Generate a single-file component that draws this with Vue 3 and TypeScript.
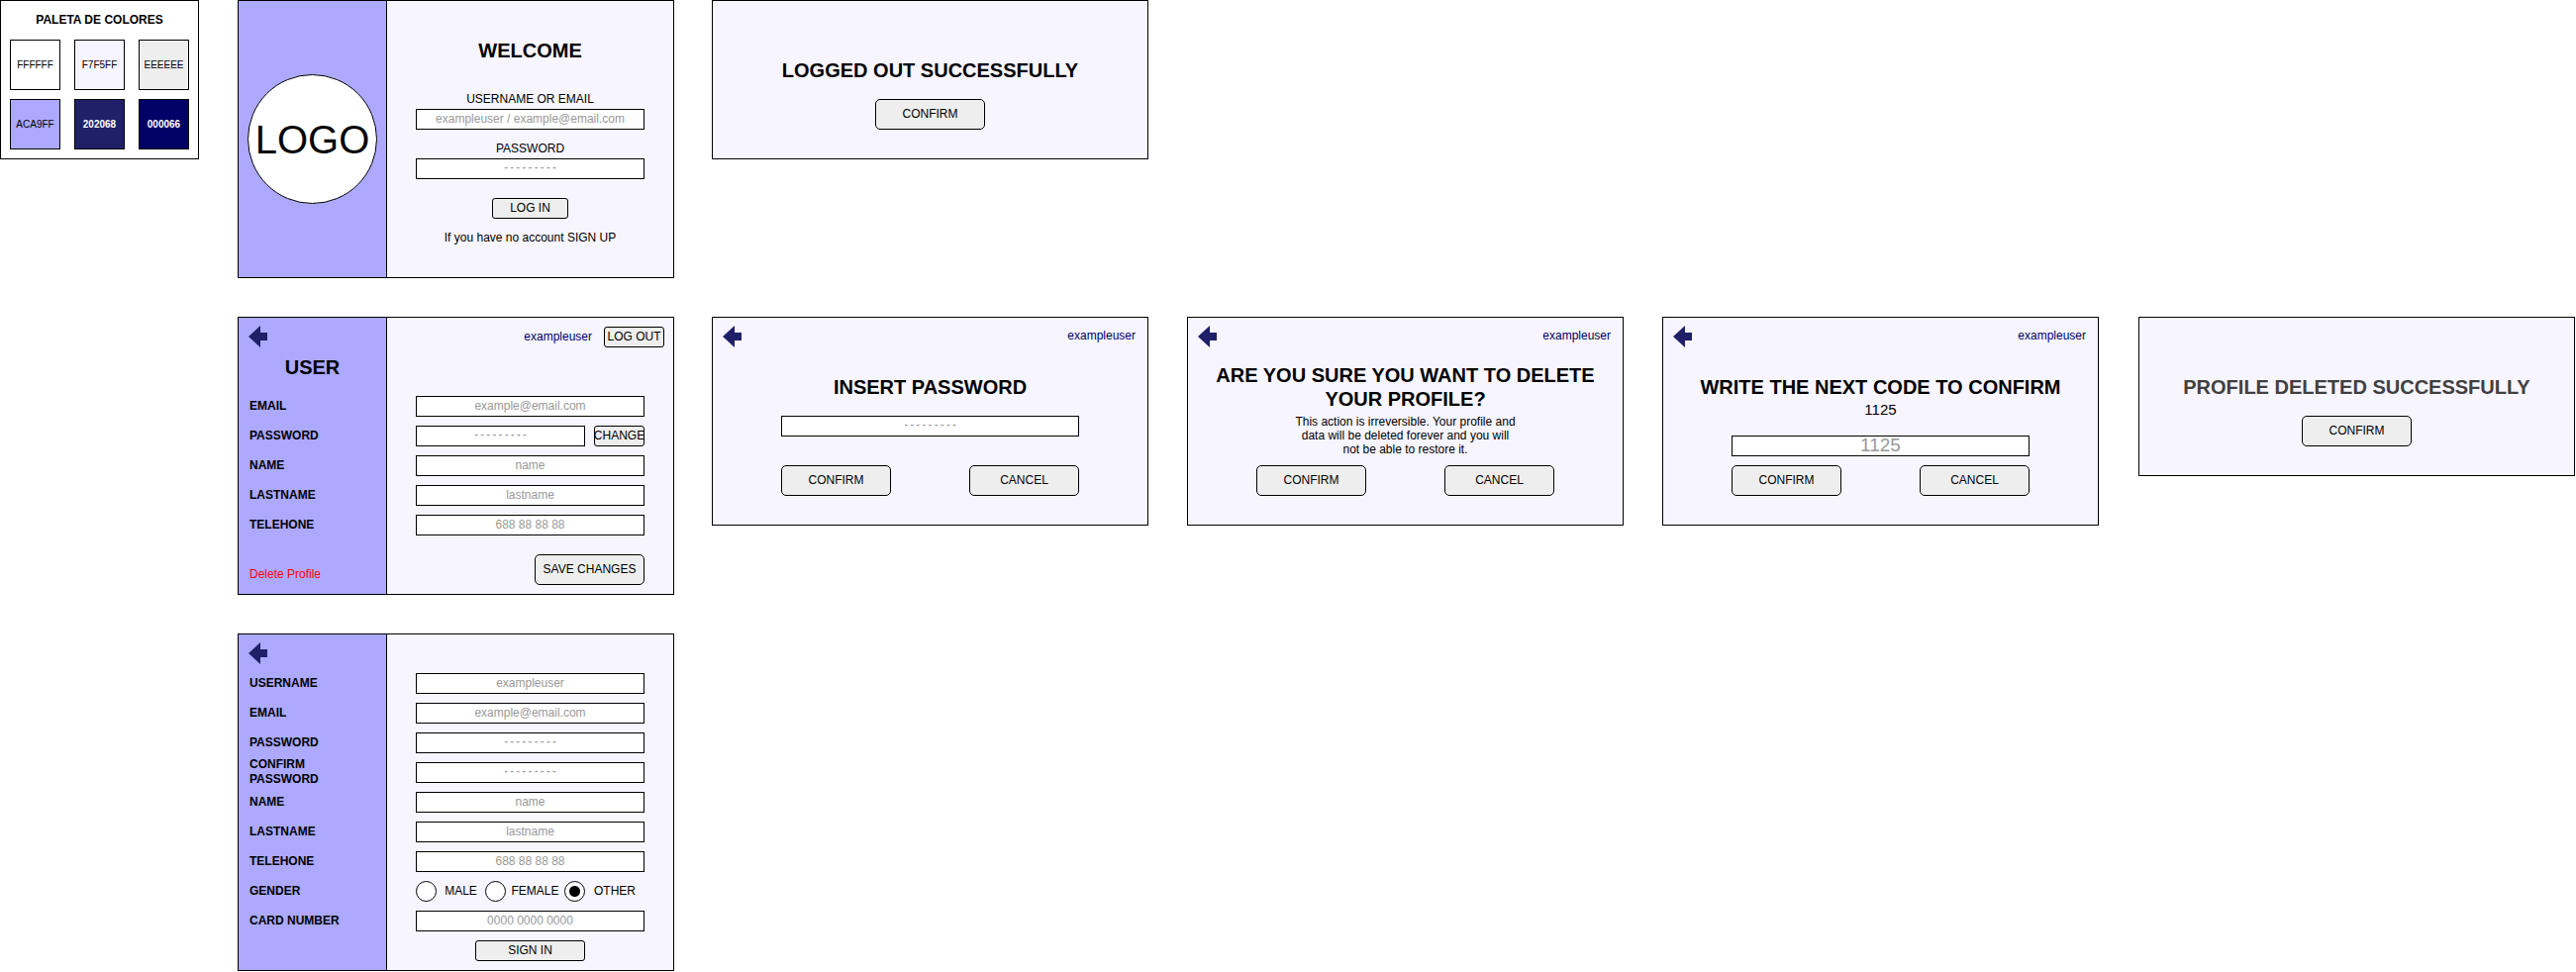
<script setup lang="ts">
interface Swatch {
  hex: string
  dark: boolean
}

interface Field {
  id: string
  label: string
  type: string
  placeholder: string
}

const dots = '- - - - - - - - -'

const swatches: Swatch[] = [
  { hex: 'FFFFFF', dark: false },
  { hex: 'F7F5FF', dark: false },
  { hex: 'EEEEEE', dark: false },
  { hex: 'ACA9FF', dark: false },
  { hex: '202068', dark: true },
  { hex: '000066', dark: true },
]

const profileFields: Field[] = [
  { id: 'profile-email', label: 'EMAIL', type: 'email', placeholder: 'example@email.com' },
  { id: 'profile-password', label: 'PASSWORD', type: 'password', placeholder: dots },
  { id: 'profile-name', label: 'NAME', type: 'text', placeholder: 'name' },
  { id: 'profile-lastname', label: 'LASTNAME', type: 'text', placeholder: 'lastname' },
  { id: 'profile-phone', label: 'TELEHONE', type: 'tel', placeholder: '688 88 88 88' },
]

const signupFields: Field[] = [
  { id: 'signup-username', label: 'USERNAME', type: 'text', placeholder: 'exampleuser' },
  { id: 'signup-email', label: 'EMAIL', type: 'email', placeholder: 'example@email.com' },
  { id: 'signup-password', label: 'PASSWORD', type: 'password', placeholder: dots },
  { id: 'signup-confirm', label: 'CONFIRM PASSWORD', type: 'password', placeholder: dots },
  { id: 'signup-name', label: 'NAME', type: 'text', placeholder: 'name' },
  { id: 'signup-lastname', label: 'LASTNAME', type: 'text', placeholder: 'lastname' },
  { id: 'signup-phone', label: 'TELEHONE', type: 'tel', placeholder: '688 88 88 88' },
]

const genders: string[] = ['MALE', 'FEMALE', 'OTHER']
</script>

<template>
  <main class="board">
    <section class="card palette">
      <h2 class="palette-title">PALETA DE COLORES</h2>
      <div class="swatches">
        <div
          v-for="s in swatches"
          :key="s.hex"
          class="swatch"
          :class="{ dark: s.dark }"
          :style="{ backgroundColor: '#' + s.hex }"
        >{{ s.hex }}</div>
      </div>
    </section>

    <section class="card split login">
      <aside class="side side-logo">
        <div class="logo">LOGO</div>
      </aside>
      <form class="pane login-pane" @submit.prevent>
        <h1 class="title">WELCOME</h1>
        <div class="stack">
          <label class="caption" for="login-user">USERNAME OR EMAIL</label>
          <input id="login-user" class="field" type="text" placeholder="exampleuser / example@email.com">
          <label class="caption next" for="login-password">PASSWORD</label>
          <input id="login-password" class="field" type="password" :placeholder="dots">
        </div>
        <button class="btn small login-btn" type="submit">LOG IN</button>
        <p class="signup-line">If you have no account <a href="#signup">SIGN UP</a></p>
      </form>
    </section>

    <section class="card notice logged-out">
      <h1 class="title">LOGGED OUT SUCCESSFULLY</h1>
      <button class="btn" type="button">CONFIRM</button>
    </section>

    <section class="card split profile">
      <aside class="side">
        <button class="back" type="button" aria-label="Back">
          <svg viewBox="0 0 19 22" width="19" height="22"><path d="M0 11 L12 0 V7 H19 V15 H12 V22 Z" /></svg>
        </button>
        <h1 class="title side-title">USER</h1>
        <div class="labels">
          <label v-for="f in profileFields" :key="f.id" :for="f.id">{{ f.label }}</label>
        </div>
        <a class="delete" href="#delete">Delete Profile</a>
      </aside>
      <form class="pane profile-pane" @submit.prevent>
        <div class="account">
          <a class="user" href="#profile">exampleuser</a>
          <button class="btn small logout" type="button">LOG OUT</button>
        </div>
        <div class="fields">
          <div v-for="f in profileFields" :key="f.id" class="line">
            <input :id="f.id" class="field" :type="f.type" :placeholder="f.placeholder">
            <button v-if="f.type === 'password'" class="btn small change" type="button">CHANGE</button>
          </div>
        </div>
        <button class="btn save" type="submit">SAVE CHANGES</button>
      </form>
    </section>

    <section class="card dialog insert">
      <header class="bar">
        <button class="back" type="button" aria-label="Back">
          <svg viewBox="0 0 19 22" width="19" height="22"><path d="M0 11 L12 0 V7 H19 V15 H12 V22 Z" /></svg>
        </button>
        <a class="user" href="#profile">exampleuser</a>
      </header>
      <div class="body">
        <h1 class="title">INSERT PASSWORD</h1>
        <input class="field" type="password" aria-label="Password" :placeholder="dots">
      </div>
      <div class="actions">
        <button class="btn" type="button">CONFIRM</button>
        <button class="btn" type="button">CANCEL</button>
      </div>
    </section>

    <section class="card dialog sure">
      <header class="bar">
        <button class="back" type="button" aria-label="Back">
          <svg viewBox="0 0 19 22" width="19" height="22"><path d="M0 11 L12 0 V7 H19 V15 H12 V22 Z" /></svg>
        </button>
        <a class="user" href="#profile">exampleuser</a>
      </header>
      <div class="body">
        <h1 class="title">ARE YOU SURE YOU WANT TO DELETE YOUR PROFILE?</h1>
        <p class="warning">This action is irreversible. Your profile and data will be deleted forever and you will not be able to restore it.</p>
      </div>
      <div class="actions">
        <button class="btn" type="button">CONFIRM</button>
        <button class="btn" type="button">CANCEL</button>
      </div>
    </section>

    <section class="card dialog code">
      <header class="bar">
        <button class="back" type="button" aria-label="Back">
          <svg viewBox="0 0 19 22" width="19" height="22"><path d="M0 11 L12 0 V7 H19 V15 H12 V22 Z" /></svg>
        </button>
        <a class="user" href="#profile">exampleuser</a>
      </header>
      <div class="body">
        <h1 class="title">WRITE THE NEXT CODE TO CONFIRM</h1>
        <p class="number">1125</p>
        <input class="field large" type="text" aria-label="Confirmation code" placeholder="1125">
      </div>
      <div class="actions">
        <button class="btn" type="button">CONFIRM</button>
        <button class="btn" type="button">CANCEL</button>
      </div>
    </section>

    <section class="card notice deleted">
      <h1 class="title">PROFILE DELETED SUCCESSFULLY</h1>
      <button class="btn" type="button">CONFIRM</button>
    </section>

    <section class="card split signup">
      <aside class="side">
        <button class="back" type="button" aria-label="Back">
          <svg viewBox="0 0 19 22" width="19" height="22"><path d="M0 11 L12 0 V7 H19 V15 H12 V22 Z" /></svg>
        </button>
        <div class="labels">
          <label v-for="f in signupFields" :key="f.id" :for="f.id">{{ f.label }}</label>
          <span id="gender-label" class="label">GENDER</span>
          <label for="signup-card">CARD NUMBER</label>
        </div>
      </aside>
      <form id="signup" class="pane signup-pane" @submit.prevent>
        <div class="fields">
          <div v-for="f in signupFields" :key="f.id" class="line">
            <input :id="f.id" class="field" :type="f.type" :placeholder="f.placeholder">
          </div>
          <div class="genders" role="radiogroup" aria-labelledby="gender-label">
            <label v-for="g in genders" :key="g" class="gender">
              <input type="radio" name="gender" :value="g" :checked="g === 'OTHER'">
              <span>{{ g }}</span>
            </label>
          </div>
          <div class="line">
            <input id="signup-card" class="field" type="text" placeholder="0000 0000 0000">
          </div>
        </div>
        <button class="btn small signup-btn" type="submit">SIGN IN</button>
      </form>
    </section>
  </main>
</template>

<style>
body {
  background: #fff;
}
</style>

<style scoped>
.board,
.board * {
  box-sizing: border-box;
}

.board {
  display: grid;
  grid-template-columns:
    201fr 39px 441fr 38px 441fr 39px 441fr 39px 441fr 40px 441fr;
  row-gap: 39px;
  align-items: start;
  padding: 0 1px 1px 0;
  font: 12px/20px "Liberation Sans", Arial, sans-serif;
  color: #000;
}

h1,
h2,
p {
  margin: 0;
}

a {
  color: inherit;
  text-decoration: none;
}

.card {
  border: 1px solid #000;
  background: #f7f5ff;
}

.palette { grid-area: 1 / 1; }
.login { grid-area: 1 / 3; }
.logged-out { grid-area: 1 / 5; }
.profile { grid-area: 2 / 3; }
.insert { grid-area: 2 / 5; }
.sure { grid-area: 2 / 7; }
.code { grid-area: 2 / 9; }
.deleted { grid-area: 2 / 11; }
.signup { grid-area: 3 / 3; }

.title {
  font-size: 20px;
  line-height: 24px;
  font-weight: bold;
  text-align: center;
}

/* Palette */
.palette {
  background: #fff;
  padding: 9px;
}

.palette-title {
  font-size: 12px;
  line-height: 20px;
  text-align: center;
  margin-bottom: 10px;
}

.swatches {
  display: grid;
  grid-template-columns: repeat(3, 1fr);
  gap: 9px 14px;
}

.swatch {
  display: flex;
  align-items: center;
  justify-content: center;
  height: 51px;
  border: 1px solid #000;
  font-size: 10px;
}

.swatch.dark {
  color: #fff;
  font-weight: bold;
}

/* Controls */
.field {
  display: block;
  flex: 1;
  width: 100%;
  min-width: 0;
  height: 21px;
  padding: 0 0 1px;
  border: 1px solid #000;
  border-radius: 0;
  background: #fff;
  font: inherit;
  text-align: center;
  outline: none;
}

.field::placeholder {
  color: #999;
  opacity: 1;
}

.field[type="password"] {
  padding-bottom: 4px;
  font-size: 10px;
  font-weight: bold;
}

.field.large {
  font-size: 19px;
}

.btn {
  display: flex;
  align-items: center;
  justify-content: center;
  width: 111px;
  height: 31px;
  padding: 0 0 1px;
  border: 1px solid #000;
  border-radius: 5px;
  background: #eee;
  color: #000;
  font: inherit;
  white-space: nowrap;
}

.btn.small {
  height: 21px;
  border-radius: 3px;
}

.back {
  display: block;
  width: 19px;
  height: 22px;
  padding: 0;
  border: 0;
  background: none;
}

.back svg {
  display: block;
  fill: #202068;
}

.user {
  color: #006;
}

/* Two-part screens */
.split {
  display: flex;
}

.side {
  flex: 0 0 150px;
  padding: 8px 10px;
  border-right: 1px solid #000;
  background: #aca9ff;
}

.pane {
  flex: 1;
  min-width: 0;
  padding: 0 29px;
}

.side-logo {
  display: flex;
  align-items: center;
  justify-content: center;
  padding: 0;
}

.logo {
  display: flex;
  flex: none;
  align-items: center;
  justify-content: center;
  width: 131px;
  height: 131px;
  border: 1px solid #000;
  border-radius: 50%;
  background: #fff;
  font-size: 40px;
  line-height: 48px;
}

.login-pane {
  display: flex;
  flex-direction: column;
  align-items: center;
  padding-top: 38px;
  padding-bottom: 30px;
}

.stack {
  width: 100%;
  margin-top: 27px;
}

.caption {
  display: block;
  text-align: center;
}

.caption.next {
  margin-top: 9px;
}

.login-btn {
  width: 77px;
  margin-top: 19px;
}

.signup-line {
  margin-top: 9px;
}

.side-title {
  margin-top: 8px;
}

.labels {
  display: grid;
  grid-auto-rows: 30px;
  align-items: center;
  padding-left: 1px;
  font-weight: bold;
}

.labels label,
.labels .label {
  line-height: 15px;
}

.profile .labels {
  margin-top: 12px;
}

.delete {
  display: block;
  margin: 25px 0 0 1px;
  color: #f00;
}

.account {
  display: flex;
  justify-content: flex-end;
  gap: 12px;
  margin-right: -20px;
}

.logout {
  width: 61px;
}

.profile-pane {
  padding-top: 9px;
  padding-bottom: 9px;
}

.fields {
  display: grid;
  gap: 9px;
}

.profile .fields {
  margin-top: 49px;
}

.line {
  display: flex;
  gap: 9px;
}

.change {
  width: 51px;
}

.save {
  margin: 19px 0 0 auto;
}

/* Sign-up form */
.signup .labels {
  margin-top: 4px;
}

.signup-pane {
  padding-top: 39px;
  padding-bottom: 9px;
}

.signup-btn {
  margin: 9px auto 0;
}

.genders {
  display: grid;
  grid-template-columns: 70fr 80fr 81fr;
}

.gender {
  display: flex;
  align-items: center;
  height: 21px;
}

.gender span {
  flex: 1;
  padding-bottom: 1px;
  text-align: center;
}

.gender input {
  appearance: none;
  flex: none;
  width: 21px;
  height: 21px;
  margin: 0;
  border: 1px solid #000;
  border-radius: 50%;
  background: #fff;
}

.gender input:checked {
  background: radial-gradient(circle, #000 5px, #fff 6px);
}

/* Messages */
.notice {
  display: flex;
  flex-direction: column;
  align-items: center;
  gap: 17px;
  padding: 58px 10px 29px;
}

.deleted .title {
  color: #404040;
}

/* Dialogs */
.bar {
  display: flex;
  justify-content: space-between;
  padding: 8px 12px 0 10px;
}

.body {
  display: flex;
  flex-direction: column;
  align-items: center;
  min-height: 119px;
  padding: 28px 69px 0;
}

.body .title {
  margin: 0 -69px;
  padding: 0 20px;
}

.insert .field {
  flex: none;
  margin-top: 17px;
}

.sure .body {
  padding-top: 16px;
}

.warning {
  width: 224px;
  margin-top: 4px;
  line-height: 14px;
  text-align: center;
}

.number {
  margin-top: 1px;
  font-size: 15px;
  line-height: 20px;
}

.code .field {
  flex: none;
  margin-top: 16px;
}

.actions {
  display: flex;
  justify-content: space-between;
  padding: 0 69px 29px;
}
</style>
